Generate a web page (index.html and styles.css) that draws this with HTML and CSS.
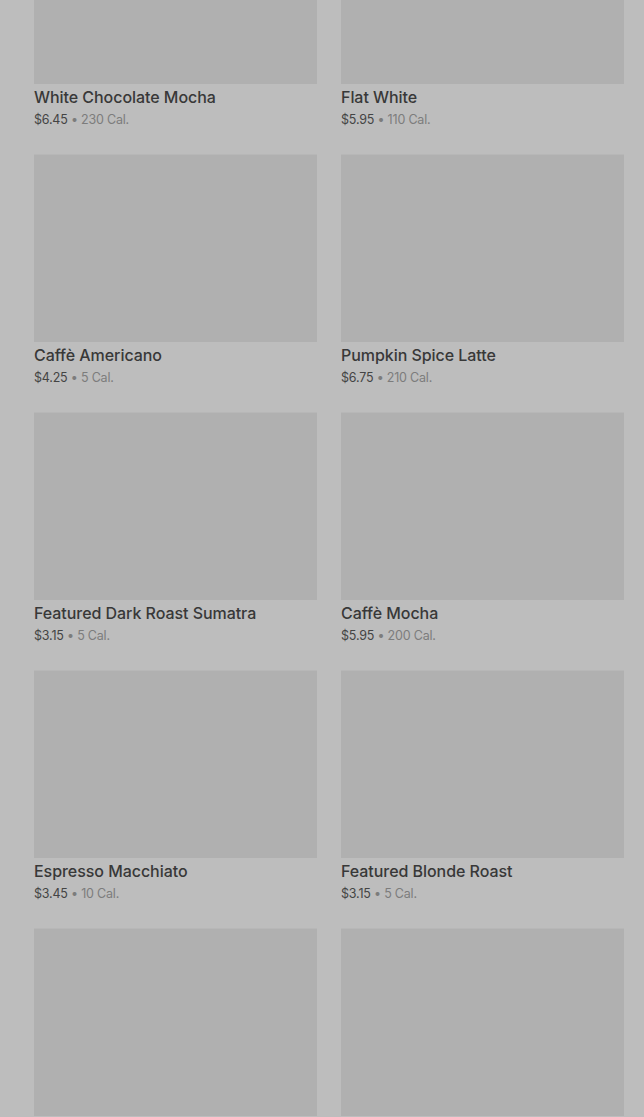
FILE: index.html
```html
<!DOCTYPE html>
<html lang="en">
<head>
<meta charset="UTF-8">
<meta name="viewport" content="width=device-width, initial-scale=1.0">
<title>Menu</title>
<link rel="stylesheet" href="styles.css">
</head>
<body>

<div id="productList">
  <div class="product-card">
    <div class="product-image"></div>
    <div class="product-info">
      <p class="product-name">White Chocolate Mocha</p>
      <p class="product-meta">$6.45 <span class="cal">• 230 Cal.</span></p>
    </div>
  </div>
  <div class="product-card">
    <div class="product-image"></div>
    <div class="product-info">
      <p class="product-name">Flat White</p>
      <p class="product-meta">$5.95 <span class="cal">• 110 Cal.</span></p>
    </div>
  </div>
  <div class="product-card">
    <div class="product-image"></div>
    <div class="product-info">
      <p class="product-name">Caffè Americano</p>
      <p class="product-meta">$4.25 <span class="cal">• 5 Cal.</span></p>
    </div>
  </div>
  <div class="product-card">
    <div class="product-image"></div>
    <div class="product-info">
      <p class="product-name">Pumpkin Spice Latte</p>
      <p class="product-meta">$6.75 <span class="cal">• 210 Cal.</span></p>
    </div>
  </div>
  <div class="product-card">
    <div class="product-image"></div>
    <div class="product-info">
      <p class="product-name">Featured Dark Roast Sumatra</p>
      <p class="product-meta">$3.15 <span class="cal">• 5 Cal.</span></p>
    </div>
  </div>
  <div class="product-card">
    <div class="product-image"></div>
    <div class="product-info">
      <p class="product-name">Caffè Mocha</p>
      <p class="product-meta">$5.95 <span class="cal">• 200 Cal.</span></p>
    </div>
  </div>
  <div class="product-card">
    <div class="product-image"></div>
    <div class="product-info">
      <p class="product-name">Espresso Macchiato</p>
      <p class="product-meta">$3.45 <span class="cal">• 10 Cal.</span></p>
    </div>
  </div>
  <div class="product-card">
    <div class="product-image"></div>
    <div class="product-info">
      <p class="product-name">Featured Blonde Roast</p>
      <p class="product-meta">$3.15 <span class="cal">• 5 Cal.</span></p>
    </div>
  </div>
  <div class="product-card">
    <div class="product-image"></div>
  </div>
  <div class="product-card">
    <div class="product-image"></div>
  </div>
</div>

</body>
</html>
```

FILE: styles.css
```css
body {
  font-family: Inter, "Noto Sans", sans-serif;
  margin: 0;
  padding: 0;
  background-color: #bdbdbd;
}

#productList {
  display: grid;
  grid-template-columns: 283px 283px;
  column-gap: 24px;
  row-gap: 25px;
  padding: 0 20px 0 34px;
  /* list is scrolled part way into the first row */
  margin-top: -104px;
}

.product-image {
  height: 188px;
  background-color: #b0b0b0;
  border-top: 1px solid #b7b7b7;
  box-sizing: border-box;
}

.product-info {
  padding-top: 3px;
}

.product-name {
  margin: 0;
  font-size: 16px;
  line-height: 20px;
  font-weight: 500;
  color: #383838;
  letter-spacing: -0.05px;
}

.product-meta {
  margin: 4px 0 0;
  font-size: 12.5px;
  line-height: 18px;
  color: #444;
  letter-spacing: -0.2px;
}

.product-meta .cal {
  color: #7c7c7c;
}
```
